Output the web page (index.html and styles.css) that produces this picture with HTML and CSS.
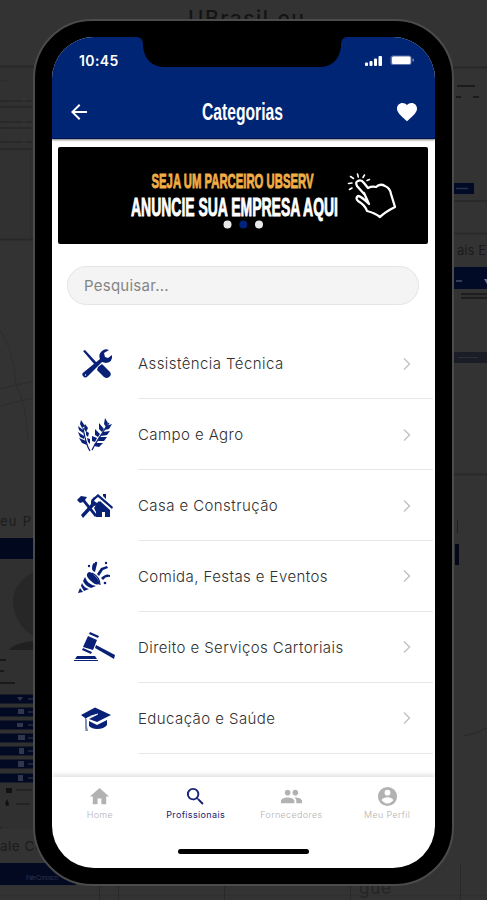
FILE: index.html
```html
<!DOCTYPE html>
<html lang="pt-BR">
<head>
<meta charset="utf-8">
<title>Categorias</title>
<link rel="stylesheet" href="styles.css">
</head>
<body>
<svg class="backdrop" viewBox="0 0 487 900" aria-hidden="true">
  <rect width="487" height="66" fill="#333"/>
  <rect y="66" width="34" height="173" fill="#313131"/>
  <path d="M0 66.5H34M453 67.5H487M0 239.500H34" stroke="#282828" stroke-width="2"/>
  <path d="M30.500 150V238M0 81H9" stroke="#2b2b2b"/>
  <path d="M0 101H32M0 122H32M0 142H32" stroke="#222" stroke-dasharray="14 1 8 2"/>
  <path d="M0 107H32M0 128H32M0 149H32" stroke="#292929" stroke-width="2"/>
  <path d="M0 330Q14 350 16 385Q25 400 28 440M0 389L34 381M0 406L34 398" stroke="#2d2d2d" fill="none"/>
  <text x="188" y="26" font-size="21" textLength="116" class="ghost dark">UBrasil.eu</text>
  <text x="0" y="526" font-size="13" textLength="31" class="ghost">eu P</text>
  <rect y="538" width="34" height="21" fill="#02081d"/>
  <rect y="559" width="34" height="270" fill="#303030"/>
  <path d="M34 572Q12 583 13 604Q16 627 34 636Z" fill="#272727"/>
  <path d="M9 650Q14 643 34 641V650Z" fill="#202020"/>
  <path d="M0 660H6M0 671H4M0 683H15" stroke="#191919" stroke-width="2"/>
  <path d="M0 699H34M0 712H34M0 725H34M0 738H34M0 751H34M0 764H34M0 778H34" stroke="#020922" stroke-width="9"/>
  <path d="M17 697H23L20 701ZM18 709H24V714H18ZM17 723H23V727H17ZM18 735H25V740H18ZM19 748H24V754H19ZM18 761H24V767H18ZM18 775H23V781H18Z" fill="#30374b"/>
  <path d="M28 699H33M28 712H33M28 725H33M28 738H33M28 751H33M28 764H33M28 778H33" stroke="#262c42" stroke-width="1.500"/>
  <path d="M6 788H12V793H6ZM5 804L7 799L9 804Q8 808 5 804Z" fill="#111"/>
  <path d="M16 790H32M16 804H30" stroke="#232323" stroke-width="2"/>
  <path d="M0 829L3 826" stroke="#222"/>
  <text x="0" y="851" font-size="13.500" textLength="43" class="ghost">ale Co</text>
  <rect y="863" width="76" height="22" fill="#020920"/>
  <text x="26" y="880" font-size="6" textLength="32" class="ghost pale">Fale Conosco</text>
  <path d="M0 895.500H487" stroke="#303030"/>
  <path d="M99.500 886V900M118.500 886V900M224.500 886V900M350.500 886V900M460.500 864V900" stroke="#292929"/>
  <text x="359" y="894" font-size="17" textLength="32" class="ghost faint">gue</text>
  <path d="M457 86H475M456 97H461M473 97H479" stroke="#1b1b1b" stroke-width="2"/>
  <path d="M453 201H487M453 233.500H487M453 474.500H487" stroke="#2a2a2a" stroke-width="2"/>
  <rect x="454" y="183" width="20" height="11" fill="#020b25"/>
  <path d="M456 188.500H468" stroke="#29314b" stroke-width="1.500"/>
  <text x="457" y="255" font-size="13" textLength="29" class="ghost">ais E</text>
  <rect x="454" y="267" width="33" height="22" fill="#020b25"/>
  <path d="M456 281H462" stroke="#353d55" stroke-width="2"/>
  <path d="M484 279H490L487 284Z" fill="#69718a"/>
  <path d="M461 296H487" stroke="#1e1e20" stroke-width="6"/>
  <path d="M461 296H487" stroke="#303030" stroke-width="2"/>
  <rect x="454" y="352" width="33" height="11" fill="#1b1d26"/>
  <path d="M458 357.500H478" stroke="#2b2e39"/>
  <path d="M457.500 520V533" stroke="#202020"/>
  <rect x="455" y="544" width="4" height="21" fill="#04071c"/>
  <path d="M463 736Q476 734 487 728" stroke="#272727" fill="none"/>
</svg>

<main class="phone">
  <div class="screen">
    <div class="notch"><svg viewBox="0 0 208 31"><path d="M0 0Q5 1 5 8V10Q8 30 27 30H181Q200 30 203 10V8Q203 1 208 0Z"/></svg></div>
    <header class="header">
      <div class="status">
        <span class="time">10:45</span>
        <svg class="signals" viewBox="0 0 52 14" fill="#fff">
          <rect x="1" y="8.500" width="3" height="3.500" rx="1"/><rect x="5.500" y="7" width="3" height="5" rx="1"/><rect x="10" y="4.500" width="3" height="7.500" rx="1"/><rect x="14.500" y="2" width="3.500" height="10" rx="1"/>
          <rect x="26.500" y="1.500" width="21" height="9.500" rx="2.500" fill="#6075ac"/><rect x="28" y="2.500" width="18.500" height="7.500" rx="1.500"/><rect x="48.500" y="4.500" width="1.300" height="3" rx=".6" fill="#8798c2"/>
        </svg>
      </div>
      <div class="titlebar">
        <svg class="back" viewBox="0 0 24 24"><path d="M20 11H7.800l5.600-5.600L12 4l-8 8 8 8 1.400-1.400L7.800 13H20z"/></svg>
        <h1><svg class="title" viewBox="0 0 84 30"><text x="1" y="22.500" textLength="81" lengthAdjust="spacingAndGlyphs">Categorias</text></svg></h1>
        <svg class="heart" viewBox="0 0 24 24"><path d="M12 21.350l-1.450-1.320C5.400 15.360 2 12.280 2 8.500 2 5.420 4.420 3 7.500 3c1.740 0 3.410.81 4.500 2.090C13.090 3.810 14.760 3 16.500 3 19.580 3 22 5.420 22 8.500c0 3.780-3.400 6.860-8.550 11.540z"/></svg>
      </div>
    </header>

    <section class="banner">
      <svg viewBox="0 0 370 97">
        <text class="slogan gold" x="93.500" y="41" textLength="162" lengthAdjust="spacingAndGlyphs">SEJA UM PARCEIRO UBSERV</text>
        <text class="slogan white" x="73" y="68.500" textLength="207" lengthAdjust="spacingAndGlyphs">ANUNCIE SUA EMPRESA AQUI</text>
        <circle cx="169.500" cy="77.500" r="4" fill="#e8e8e8"/><circle cx="185.300" cy="77.500" r="4" fill="#00237b"/><circle cx="201" cy="77.500" r="4" fill="#e8e8e8"/>
        <g fill="none" stroke="#fff" stroke-linecap="round" stroke-linejoin="round">
          <path stroke-width="2.300" d="M307 48L299 39Q297 35 300 34Q303 32 306 36L310 41Q314 39 318 40Q322 36 327 39Q332 41 333 47L337 60Q327 65 322 70Q317 66 309 64Q307 58 300 54Q297 51 300 49Q303 49 311 57L306 46"/>
          <path stroke-width="1.600" d="M290.500 36.500L294 36M291.500 42.500L294 41M292.500 29.500L295.500 31.500M299.500 27L300.300 30M306.500 28L305 30.500M309 33.500L311.500 32.500"/>
        </g>
      </svg>
    </section>

    <input class="search" type="text" placeholder="Pesquisar..." aria-label="Pesquisar">

    <ul class="list">
      <li>
        <div class="thumb"><svg viewBox="0 0 40 40"><path d="M7 7L9 6L21 19L19 21Z"/><path d="M22 23L26 20L34 28Q36 31 33 33Q31 35 28 33L21 26Z"/><path d="M8 28L19 19L24 15Q22 10 26 7Q29 4 33 6L28 9L29 13L32 14L36 11Q37 18 30 19L26 18L12 32Q9 35 7 32Q5 30 8 28Z"/><circle cx="9.500" cy="31" r=".7" fill="#fff"/></svg></div>
        <div class="item"><span>Assistência Técnica</span><svg class="chevron" viewBox="0 0 10 16"><path d="M2 2.500l5.500 5.500-5.500 5.500"/></svg></div>
      </li>
      <li>
        <div class="thumb"><svg viewBox="0 0 40 40"><path d="M14 36Q10 30 7 13M16 35Q20 27 33 8" fill="none" stroke="#082176" stroke-width="1.300"/><path d="M5 5L9 11L6 13L4 9ZM2 11L7 15L7 18L3 15ZM2 17L8 21L8 24L4 22ZM3 23L10 26L11 30L6 28ZM9 9L12 13L10 17L8 14ZM10 16L13 18L12 22L10 20ZM11 23L14 24L14 29L12 27Z"/><path d="M29 3L32 8L30 12L28 9ZM23 8L28 14L26 17L23 14ZM19 14L24 19L22 22L19 20ZM16 21L21 23L19 27L16 26ZM30 11L36 9L33 14L28 15ZM27 17L34 16L31 20L25 21ZM23 22L31 22L28 26L22 26ZM19 28L27 28L23 32L18 31Z"/></svg></div>
        <div class="item"><span>Campo e Agro</span><svg class="chevron" viewBox="0 0 10 16"><path d="M2 2.500l5.500 5.500-5.500 5.500"/></svg></div>
      </li>
      <li>
        <div class="thumb"><svg viewBox="0 0 40 40"><path d="M1 14L5 10L11 11L9 14L21 29L19 31L7 16L4 17Z"/><path d="M5 29L15 18L15 15L18 11L20 12L18 15L21 17L23 15L23 19L18 20L7 32Z"/><path d="M20 19L24 15L34 24V31H29V26H26V31H20V26L18 22Z"/><path d="M15 14L22 8L37 21L36 23L22 11L17 15ZM27 8H30V13L27 10Z"/></svg></div>
        <div class="item"><span>Casa e Construção</span><svg class="chevron" viewBox="0 0 10 16"><path d="M2 2.500l5.500 5.500-5.500 5.500"/></svg></div>
      </li>
      <li>
        <div class="thumb"><svg viewBox="0 0 40 40"><path d="M11 17Q13 13 17 17Q24 23 23 27Q20 29 15 24Q10 20 11 17ZM9 20Q12 28 20 29L15 31Q9 29 7 24ZM6 26Q8 31 13 32L8 34L5 29ZM4 31L7 35L2 36Z"/><path d="M16 12Q16 7 18 6L21 7L19 15L17 14ZM21 17L25 11L31 9L32 11L27 13L23 19ZM25 21Q30 16 34 18V20Q30 19 27 23Z"/><circle cx="13" cy="9" r="1.200"/><circle cx="20" cy="6" r="1.200"/><circle cx="30" cy="6" r="1.200"/><circle cx="29" cy="26" r="1.300"/><path d="M16 16Q24 20 24 28" fill="none" stroke="#082176" stroke-width="1.200"/></svg></div>
        <div class="item"><span>Comida, Festas e Eventos</span><svg class="chevron" viewBox="0 0 10 16"><path d="M2 2.500l5.500 5.500-5.500 5.500"/></svg></div>
      </li>
      <li>
        <div class="thumb"><svg viewBox="0 0 40 40"><path d="M12 9L21 13L17 23L7 20ZM14 5L23 9L22 11L13 7ZM7 21L16 25L15 27L6 23Z"/><path d="M20 18L39 28L38 32L33 29L19 21ZM1 29H19L21 32H-1Z"/><path d="M-2 33.500H22" stroke="#082176"/></svg></div>
        <div class="item"><span>Direito e Serviços Cartoriais</span><svg class="chevron" viewBox="0 0 10 16"><path d="M2 2.500l5.500 5.500-5.500 5.500"/></svg></div>
      </li>
      <li>
        <div class="thumb"><svg viewBox="0 0 40 40"><path d="M5 17L19 9.500L35 17L21 24L13 21L21 17L20 16L9 20ZM13 23L21 27L31 22V27Q28 31 21 31Q16 31 13 28Z"/><path d="M9 20L22 15.500M10 20V31" fill="none" stroke="#082176"/><path d="M11 28L12 33H9Z" fill="#7889ae"/><path d="M10 21Q13 18 22 16" stroke="#fff" fill="none"/></svg></div>
        <div class="item"><span>Educação e Saúde</span><svg class="chevron" viewBox="0 0 10 16"><path d="M2 2.500l5.500 5.500-5.500 5.500"/></svg></div>
      </li>
    </ul>

    <nav class="nav">
      <a><svg viewBox="0 0 24 24"><path d="M10 20v-6h4v6h5v-8h3L12 3 2 12h3v8z"/></svg><span>Home</span></a>
      <a class="active"><svg viewBox="0 0 24 24"><path d="M15.500 14h-.79l-.28-.27A6.470 6.470 0 0 0 16 9.500 6.500 6.500 0 1 0 9.500 16c1.610 0 3.090-.59 4.230-1.570l.27.28v.79l5 4.990L20.490 19zm-6 0A4.500 4.500 0 1 1 14 9.500 4.490 4.490 0 0 1 9.500 14z"/></svg><span>Profissionais</span></a>
      <a><svg viewBox="0 0 24 24"><path d="M16 11c1.660 0 2.990-1.340 2.990-3S17.660 5 16 5s-3 1.340-3 3 1.340 3 3 3zm-8 0c1.660 0 2.990-1.340 2.990-3S9.660 5 8 5 5 6.340 5 8s1.340 3 3 3zm0 2c-2.330 0-7 1.170-7 3.500V19h14v-2.500C15 14.170 10.330 13 8 13zm8 0c-.29 0-.62.020-.97.050C16.190 13.890 17 15.020 17 16.500V19h6v-2.500c0-2.330-4.670-3.500-7-3.500z"/></svg><span>Fornecedores</span></a>
      <a><svg viewBox="0 0 24 24"><path d="M12 2a10 10 0 1 0 0 20 10 10 0 0 0 0-20zm0 3a3 3 0 1 1 0 6 3 3 0 0 1 0-6zm0 14.200A7.200 7.200 0 0 1 6 15.980C6.030 13.990 10 12.900 12 12.900s5.970 1.090 6 3.080a7.200 7.200 0 0 1-6 3.220z"/></svg><span>Meu Perfil</span></a>
    </nav>
    <div class="home-indicator"></div>
  </div>
</main>
</body>
</html>
```
FILE: styles.css
```css
* { box-sizing: border-box; }
body {
  margin: 0;
  width: 487px;
  height: 900px;
  overflow: hidden;
  background: #333;
  font-family: Inter, "Liberation Sans", sans-serif;
  padding: 19px 33px 0;
}
svg { display: block; }
.backdrop { position: absolute; inset: 0; width: 487px; height: 900px; z-index: -1; }
.ghost { fill: #1c1c1c; font-family: Inter, sans-serif; }
.ghost.dark { fill: #141414; font-weight: 500; }
.ghost.pale { fill: #2b334b; }
.ghost.faint { fill: #252525; }
.phone {
  width: 421px;
  height: 867px;
  border: 2px solid #4b4b4b;
  border-radius: 59px;
  background: #000;
  padding: 16px 17px;
}
.screen {
  position: relative;
  height: 831px;
  overflow: hidden;
  border-radius: 42px;
  background: #fff;
  display: flex;
  flex-direction: column;
}
.notch { position: absolute; top: 0; left: 86px; width: 208px; height: 31px; }
.header {
  flex: none;
  height: 102px;
  background: #002575;
  border-bottom: 1.500px solid #001354;
  box-shadow: 0 1px 2px #777;
}
.status {
  display: flex;
  justify-content: space-between;
  align-items: center;
  height: 47px;
  padding: 0 19px 0 27px;
}
.time { color: #fff; font-size: 14px; font-weight: 600; letter-spacing: .4px; }
.signals { width: 52px; height: 14px; }
.titlebar {
  display: flex;
  align-items: center;
  justify-content: space-between;
  height: 55px;
  padding: 0 16px;
}
.back, .heart { width: 24px; height: 24px; fill: #fff; }
.back { margin-left: -1px; }
h1 { margin: 0; }
.title { width: 84px; height: 30px; }
.title text { font: bold 23px "Liberation Sans Narrow", "Liberation Sans", sans-serif; fill: #fff; }
.banner {
  flex: none;
  margin: 7.500px 7px 0 6px;
  height: 97px;
  background: #000;
  border-radius: 2px;
}
.banner svg { width: 370px; height: 97px; }
.slogan { font-family: "Liberation Sans Narrow", "Liberation Sans", sans-serif; font-weight: bold; stroke-width: .9px; }
.gold { font-size: 20px; fill: #efae47; stroke: #efae47; }
.white { font-size: 25px; fill: #fff; stroke: #fff; }
.search {
  flex: none;
  margin: 22.500px 16px 0 15px;
  height: 39px;
  border: 1px solid #e4e4e4;
  border-radius: 20px;
  background: #f4f4f4;
  padding: 0 16px;
  font: 400 15px Inter, sans-serif;
  letter-spacing: .25px;
}
.search::placeholder { color: #858585; opacity: 1; }
.list {
  list-style: none;
  flex: none;
  margin: 23.500px 0 0;
  padding: 0;
  height: 425px;
  display: grid;
  grid-template-rows: repeat(6, 1fr);
}
.list li { display: flex; }
.thumb { width: 86px; padding: 15.500px 0 0 24px; }
.thumb svg { width: 40px; height: 40px; fill: #082176; overflow: visible; }
.item {
  flex: 1;
  margin-right: 2px;
  padding: 1px 21px 0 0;
  border-bottom: 1.500px solid #e7e7e7;
  display: flex;
  align-items: center;
  justify-content: space-between;
}
.item span {
  font-size: 15px;
  font-weight: 350;
  letter-spacing: .42px;
  color: #303030;
  white-space: nowrap;
}
.chevron { width: 10px; height: 16px; fill: none; stroke: #c4c4c4; stroke-width: 1.500; }
.nav {
  flex: none;
  margin-top: 23px;
  height: 68px;
  display: grid;
  grid-template-columns: repeat(4, 1fr);
  box-shadow: 0 -2px 5px rgba(0, 0, 0, .13);
  clip-path: inset(-12px 0 0 0);
}
.nav a {
  display: flex;
  flex-direction: column;
  align-items: center;
  padding-top: 8px;
  color: #b2b2b2;
}
.nav svg { width: 23px; height: 23px; fill: currentColor; }
.nav span { font-size: 9px; line-height: 12px; margin-top: 1px; letter-spacing: .35px; font-weight: 300; }
.nav .active { color: #152276; }
.nav .active span { font-weight: 400; }
.home-indicator { flex: none; width: 131px; height: 5px; border-radius: 3px; background: #000; margin: 4.500px auto 0; }
```
